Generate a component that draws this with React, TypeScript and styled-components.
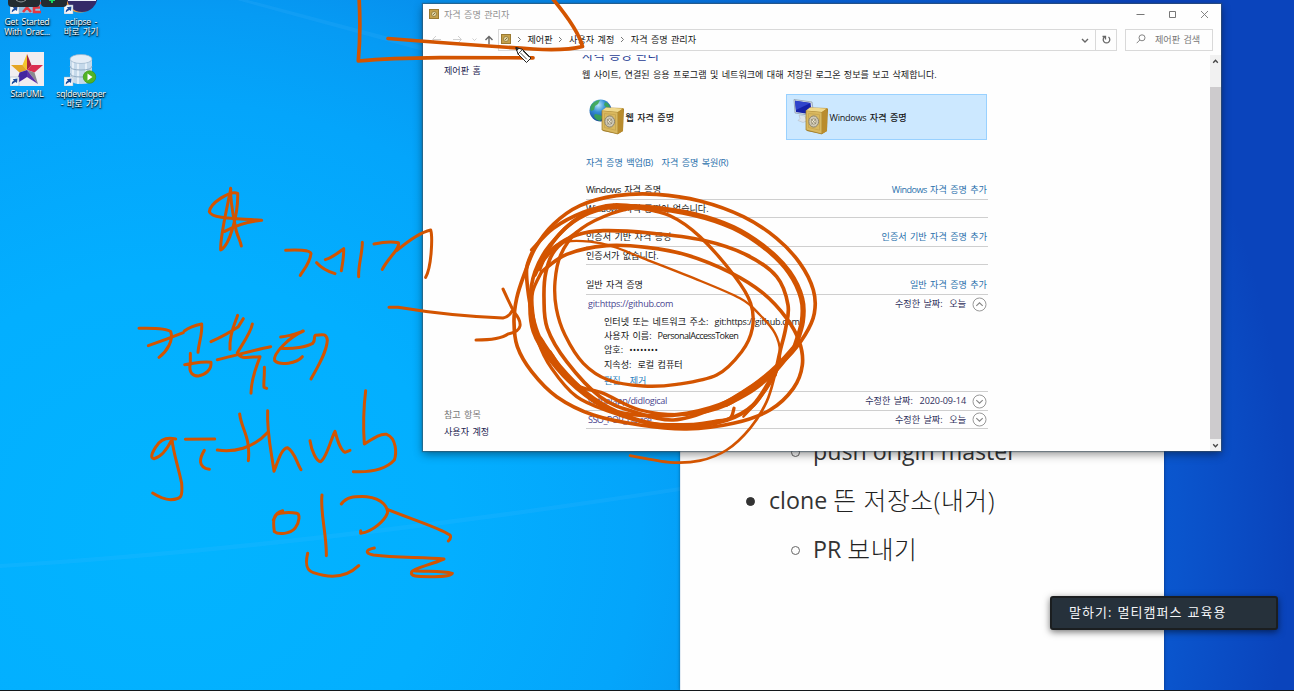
import React from "react";
import styled, { createGlobalStyle } from "styled-components";

const GlobalStyle = createGlobalStyle`
  * { box-sizing: border-box; }
  body { margin: 0; overflow: hidden; font-family: "Open Sans", "Noto Sans CJK KR", sans-serif; }
`;

const Desktop = styled.div`
  position: relative;
  width: 1294px;
  height: 691px;
  overflow: hidden;
  border-bottom: 1px solid #14181c;
  background: radial-gradient(ellipse 1120px 1020px at 170px 530px, #02b4ff 0%, #03afff 25%, #04a5fb 42%, #069bf4 51%, #078aea 60%, #0862d6 78%, #0a55cd 90%, #0a44bc 100%);
`;

/* Desktop shortcuts */
const Shortcuts = styled.div`
  display: grid;
  grid-template-columns: 54px 54px;
  grid-template-rows: 52px 60px;
  width: 108px;
`;
const Shortcut = styled.div<{ $cut?: boolean }>`
  display: flex;
  flex-direction: column;
  align-items: center;
  margin-top: ${(p) => (p.$cut ? "-20px" : "0")};
`;
const ShortcutLabel = styled.div`
  margin-top: 3px;
  font-size: 8.6px;
  line-height: 10px;
  letter-spacing: -0.2px;
  word-spacing: 1.5px;
  text-align: center;
  white-space: nowrap;
  color: #fff;
  text-shadow: 0 1px 1px #000, 1px 1px 2px rgba(0, 0, 0, 0.9);
`;
const OverlayTab = styled.div<{ $x: number; $w: number }>`
  position: absolute;
  top: -8px;
  left: ${(p) => p.$x}px;
  width: ${(p) => p.$w}px;
  height: 15px;
  border-radius: 4px;
  background: #232b31;
`;

/* Document behind the window */
const DocumentPane = styled.div`
  position: absolute;
  left: 680px;
  top: 20px;
  width: 484px;
  height: 670px;
  padding: 406px 0 0 69px;
  background: #fefefe;
  border-left: 1px solid #e4ecf4;
  box-shadow: 0 0 3px rgba(0, 0, 0, 0.4);
`;
const DocLine = styled.div<{ $nested?: boolean }>`
  display: flex;
  align-items: center;
  height: 49px;
  padding-left: ${(p) => (p.$nested ? 40 : -4)}px;
  font-size: 23.2px;
  line-height: 32px;
  color: #333;
  white-space: pre;
`;
const Hangul = styled.span`
  font-size: 24.8px;
  font-weight: 300;
  letter-spacing: 0.55px;
  color: #222;
`;
const Bullet = styled.i<{ $hollow?: boolean }>`
  width: 9px;
  height: 9px;
  margin: 4px ${(p) => (p.$hollow ? 13 : 14)}px 0 ${(p) => (p.$hollow ? 1 : -4)}px;
  border-radius: 50%;
  border: 1px solid ${(p) => (p.$hollow ? "#666" : "#333")};
  background: ${(p) => (p.$hollow ? "transparent" : "#333")};
`;

/* Credential manager window */
const Window = styled.section`
  position: absolute;
  left: 423px;
  top: 4px;
  width: 798px;
  height: 447px;
  display: flex;
  flex-direction: column;
  background: #fefefe;
  box-shadow: 0 0 1px 1px rgba(60, 80, 95, 0.55), 0 3px 9px rgba(0, 0, 0, 0.45);
  font-size: 9.1px;
  color: #161616;
  white-space: nowrap;
  word-spacing: 1px;
`;
const TitleBar = styled.header`
  display: flex;
  align-items: center;
  height: 20px;
  padding: 0 11px 0 6px;
  color: #909090;
  svg { display: block; }
`;
const Title = styled.span`
  flex: 1;
  margin-left: 5px;
`;
const WindowButtons = styled.div`
  display: flex;
  gap: 21px;
`;
const NavRow = styled.nav`
  display: flex;
  align-items: center;
  height: 26px;
  padding: 5px 8px 0 8px;
`;
const NavArrows = styled.div`
  width: 67px;
  height: 21px;
`;
const AddressBar = styled.div`
  display: flex;
  align-items: center;
  width: 619px;
  height: 22px;
  border: 1px solid #d9d9d9;
`;
const Crumbs = styled.div`
  flex: 1;
  display: flex;
  align-items: center;
  padding: 0 0 2px 2px;
  svg { display: block; }
`;
const Crumb = styled.span`
  margin-right: 5.5px;
`;
const Separator = styled.svg`
  margin: 1px 6px 0 0;
`;
const RefreshBox = styled.div`
  display: flex;
  align-items: center;
  justify-content: center;
  width: 21px;
  height: 20px;
  border-left: 1px solid #d9d9d9;
`;
const SearchBox = styled.div`
  display: flex;
  align-items: center;
  gap: 9px;
  width: 88px;
  height: 22px;
  margin-left: 8px;
  padding: 0 0 2px 10px;
  border: 1px solid #d9d9d9;
  color: #777;
`;
const Body = styled.div`
  flex: 1;
  display: flex;
  margin-top: 5px;
  min-height: 0;
  overflow: hidden;
`;
const Sidebar = styled.aside`
  display: flex;
  flex-direction: column;
  width: 159px;
  padding: 7px 0 11px 21px;
  line-height: 17px;
  color: #1c2350;
`;
const SeeAlso = styled.span`
  margin-top: auto;
  color: #777;
`;
const Content = styled.main`
  width: 406px;
  margin-right: auto;
`;
const Heading = styled.h1`
  height: 14px;
  margin: -6px 0 0;
  font-size: 12.4px;
  font-weight: 400;
  line-height: 14px;
  color: #1f3c94;
`;
const Description = styled.p`
  margin: 4px 0 0;
  height: 16px;
  line-height: 16px;
`;
const Cards = styled.div`
  display: flex;
  gap: 3px;
  margin-top: 11px;
`;
const Card = styled.div<{ $active?: boolean }>`
  display: flex;
  align-items: center;
  width: 201px;
  height: 46px;
  padding-left: 6px;
  gap: 0.5px;
  font-weight: 500;
  border: 1px solid ${(p) => (p.$active ? "#99d1ff" : "transparent")};
  background: ${(p) => (p.$active ? "#cce8ff" : "transparent")};
  span { padding-bottom: 1px; }
`;
const Links = styled.div`
  display: flex;
  gap: 9px;
  height: 16px;
  margin: 15px 0 0 4px;
  line-height: 16px;
  color: #2a70ac;
`;
const Group = styled.section<{ $top: number }>`
  margin: ${(p) => p.$top}px 0 0 4px;
  width: 402px;
`;
const GroupHeader = styled.div`
  display: flex;
  justify-content: space-between;
  height: 19px;
  padding-right: 1px;
  line-height: 18px;
  border-bottom: 1px solid #cfcfcf;
`;
const AddLink = styled.span`
  color: #2a70ac;
`;
const EmptyText = styled.div`
  height: 18px;
  line-height: 17px;
  border-bottom: 1px solid #cfcfcf;
`;
const CredentialRow = styled.div<{ $h: number; $line?: boolean }>`
  display: flex;
  align-items: center;
  height: ${(p) => p.$h}px;
  padding: 0 1px 0 2px;
  line-height: 16px;
  color: #4a4690;
  border-bottom: ${(p) => (p.$line ? "1px solid #cfcfcf" : "none")};
`;
const Modified = styled.span`
  margin-left: auto;
  margin-right: 6px;
  color: #30305c;
`;
const Details = styled.div`
  height: 79px;
  padding: 2px 0 0 18px;
  line-height: 14.2px;
  border-bottom: 1px solid #cfcfcf;
`;
const DetailLine = styled.div`
  display: flex;
  gap: 6px;
`;
const DetailActions = styled(DetailLine)`
  gap: 9px;
  margin-top: 2px;
  color: #2a80bc;
`;
const Latin = styled.span<{ $ls?: number }>`
  letter-spacing: ${(p) => p.$ls ?? -0.55}px;
`;
const ScrollBar = styled.div`
  display: flex;
  flex-direction: column;
  width: 11px;
  background: #cdcbcd;
`;
const ScrollEnd = styled.div<{ $h: number }>`
  height: ${(p) => p.$h}px;
  margin-top: ${(p) => (p.$h < 20 ? "auto" : "0")};
  padding: 3px 0 0 2px;
  background: #f1f1f1;
  svg { display: block; }
`;

const Toast = styled.div`
  position: absolute;
  left: 1050px;
  top: 596px;
  width: 228px;
  height: 34px;
  padding-left: 17px;
  border: 2px solid #1b1e20;
  border-radius: 3px;
  background: #26313b;
  box-shadow: 0 2px 7px rgba(0, 0, 0, 0.55);
  color: #f4f6f8;
  font-size: 13px;
  line-height: 29px;
  letter-spacing: 1.05px;
  word-spacing: 0.5px;
  white-space: nowrap;
`;
const Ink = styled.svg`
  position: absolute;
  inset: 0;
  pointer-events: none;
`;

const ShortcutArrow = ({ x, y }: { x: number; y: number }) => (
  <g transform={`translate(${x} ${y})`}>
    <rect width="9" height="9" fill="#f6f8fb" stroke="#9ab" strokeWidth=".5" />
    <path d="M1.800 7.500Q1.500 4.500 4 3.800L2.800 2.200 7.500 1.500 7 6 5.500 5Q3.500 5.500 1.800 7.500z" fill="#1d4c9c" />
  </g>
);

const SafeSmall = ({ size = 10 }: { size?: number }) => (
  <svg width={size} height={size} viewBox="0 0 10 10">
    <rect x=".5" y=".5" width="9" height="9" fill="#c5a04a" stroke="#9a7a32" />
    <circle cx="5" cy="5" r="2.500" fill="#e4d7a8" stroke="#8d7635" strokeWidth=".8" />
    <path d="M4 6l2-2" stroke="#6b5520" strokeWidth=".8" />
  </svg>
);

const Safe = () => (
  <g>
    <path d="M13 13l4-3.500 17 .5 1 1-1 22-5 3-15-3z" fill="#a87d24" />
    <path d="M13 12.500l16 1.500v22l-16-4z" fill="#d9b85f" stroke="#9b7827" strokeWidth=".7" />
    <path d="M13 12.500l4-3 17 1-5 3.500z" fill="#f0d98c" />
    <path d="M29 14l5-3.500V33l-5 3z" fill="#b98c2d" />
    <path d="M15.500 15.500l11 1.200v15.500l-11-2.700z" fill="none" stroke="#c3a04c" strokeWidth=".7" />
    <ellipse cx="20.700" cy="23.500" rx="4.900" ry="5.600" fill="#cfc9b6" stroke="#8a836f" />
    <ellipse cx="20.700" cy="23.500" rx="2.300" ry="2.700" fill="#f1ead2" stroke="#8b8167" strokeWidth=".8" />
    <path d="M18 21l5 5M18.500 26.500l4.500-6" stroke="#80786a" strokeWidth=".6" />
  </g>
);

const WebIcon = () => (
  <svg width="36" height="38" viewBox="0 0 36 38">
    <defs>
      <radialGradient id="globe" cx=".4" cy=".25" r=".8">
        <stop offset="0" stopColor="#b8e8fa" />
        <stop offset=".4" stopColor="#368fd6" />
        <stop offset="1" stopColor="#123f92" />
      </radialGradient>
    </defs>
    <circle cx="11.500" cy="12.500" r="11" fill="url(#globe)" />
    <path d="M3 6Q7 2 11 2l-2 4-3 2-1 4-3 1Q0 10 3 6zM16 4q4 1 5 5l-3 1-3-3zM6 16l5 1 3 2-3 4Q6 22 5 18z" fill="#3ca84a" opacity=".85" />
    <Safe />
  </svg>
);

const ComputerIcon = () => (
  <svg width="36" height="38" viewBox="0 0 36 38">
    <path d="M1 1.500l18 2.500 2 14L2 15z" fill="#d5dfe9" stroke="#8795a6" strokeWidth=".7" />
    <path d="M2 2.800l15.500 2.200 1.500 11.500L3 14z" fill="#1622a8" />
    <path d="M2 2.800l15.500 2.200L3 12z" fill="#3044cc" />
    <path d="M6 17l6 1 1 3 3 1-6 2.500-5-2 2-2z" fill="#dbe2e9" stroke="#aab4be" strokeWidth=".5" />
    <Safe />
  </svg>
);

const Chevron = ({ up }: { up?: boolean }) => (
  <svg width="15" height="15" viewBox="0 0 15 15">
    <circle cx="7.500" cy="7.500" r="6.500" fill="#fff" stroke="#999" />
    <path d={up ? "M4.300 8.800L7.500 5.800l3.200 3" : "M4.300 6.200l3.200 3 3.200-3"} fill="none" stroke="#858585" strokeWidth="1.100" />
  </svg>
);

const Caret = ({ up }: { up?: boolean }) => (
  <svg width="7" height="7" viewBox="0 0 7 7">
    <path d={up ? "M1.200 4.800L3.500 2.200l2.300 2.600" : "M1.200 2.200l2.300 2.600 2.300-2.600"} fill="none" stroke="#444" strokeWidth="1.300" />
  </svg>
);

const Sep = () => (
  <Separator width="5" height="7" viewBox="0 0 5 7">
    <path d="M1 1l2.500 2.500L1 6" fill="none" stroke="#777" />
  </Separator>
);

type Point = [number, number];

/* Catmull-Rom spline through the pen samples */
function smooth(p: Point[]): string {
  let d = `M${p[0][0]} ${p[0][1]}`;
  for (let i = 0; i < p.length - 1; i++) {
    const a = p[i - 1] ?? p[i];
    const b = p[i];
    const c = p[i + 1];
    const e = p[i + 2] ?? c;
    d += `C${b[0] + (c[0] - a[0]) / 6} ${b[1] + (c[1] - a[1]) / 6} ${c[0] - (e[0] - b[0]) / 6} ${c[1] - (e[1] - b[1]) / 6} ${c[0]} ${c[1]}`;
  }
  return d;
}

/* Loops round the credential entry, in thirds of a pixel from (500, 175) */
const loops: { w: number; p: Point[] }[] = [
  { w: 11, p: [[340, 92], [240, 125], [150, 210], [105, 290], [90, 380], [100, 470], [150, 555], [230, 640], [330, 705], [450, 722], [560, 715], [680, 680], [790, 610], [860, 550], [915, 480], [943, 415], [940, 345], [900, 265], [830, 190], [730, 125], [600, 78], [470, 58], [350, 62], [240, 92], [160, 148], [105, 220], [72, 300], [50, 370], [42, 440], [52, 515], [95, 590], [170, 665], [280, 720], [420, 750], [560, 762], [700, 745], [810, 705], [880, 640], [907, 570], [898, 500], [860, 430], [790, 355], [690, 292], [560, 240], [440, 217], [320, 212], [200, 238], [125, 290]] },
  { w: 16, p: [[320, 96], [440, 97], [580, 118], [700, 158], [800, 222], [868, 292], [905, 370], [907, 440], [885, 515]] },
  { w: 11, p: [[885, 515], [830, 585], [760, 645], [680, 690]] },
  { w: 11, p: [[95, 225], [160, 160], [250, 112], [340, 90], [440, 98]] },
  { w: 11, p: [[95, 235], [80, 280], [83, 340], [95, 410], [120, 490], [180, 580], [255, 650]] },
  { w: 13, p: [[120, 490], [180, 575], [260, 655], [350, 710], [450, 745], [560, 755], [680, 735], [760, 690], [820, 600]] },
  { w: 10, p: [[125, 290], [98, 350], [98, 410], [115, 500], [155, 580], [230, 665], [330, 710], [450, 745], [580, 748], [650, 738], [690, 730], [702, 700]] },
  { w: 11, p: [[105, 300], [140, 230], [190, 165], [255, 120], [340, 92]] },
  { w: 11, p: [[125, 262], [170, 212], [230, 180], [310, 167], [450, 174], [610, 196], [740, 240], [830, 305], [864, 390], [857, 460], [840, 530], [825, 600]] },
  { w: 8, p: [[825, 600], [800, 680], [750, 760], [680, 825], [600, 857], [510, 862], [390, 842]] },
  { w: 10, p: [[480, 108], [410, 98], [310, 125], [230, 172], [182, 240], [165, 320], [169, 400], [195, 480], [250, 565], [325, 615], [430, 633], [530, 628], [650, 600], [725, 530], [757, 460], [752, 385], [705, 305], [600, 185], [510, 122], [410, 98]] },
  { w: 11, p: [[230, 172], [165, 225], [138, 290], [132, 370], [142, 460], [200, 560], [300, 665], [400, 710], [520, 735], [640, 700], [760, 630], [832, 570], [895, 500]] },
  { w: 7, p: [[120, 285], [150, 225], [200, 200], [270, 200], [340, 215], [430, 250], [570, 305], [720, 370], [780, 420], [825, 475], [840, 530], [830, 590], [780, 670], [730, 725]] },
  { w: 10, p: [[150, 530], [220, 625], [310, 655], [420, 705], [560, 718], [680, 690], [790, 615]] },
];

const handwriting: string[] = [
  "M302 55C300 100 315 160 318 180C324 202 332 215 334 228",
  "M302 58C290 120 270 200 272 240C300 225 325 130 323 70C300 60 240 100 238 125C246 148 330 145 395 151C350 155 310 170 284 184",
  "M467 241C500 238 540 240 543 250C540 280 520 300 511 316",
  "M560 278C575 295 590 303 615 311M586 269C610 262 635 240 641 236C642 260 637 285 634 302",
  "M697 217C697 250 684 290 686 320",
  "M732 222C760 216 790 215 805 218C812 235 775 262 757 298M800 242C850 200 880 185 902 180C908 200 905 290 887 322",
  "M27 475C70 474 110 474 122 485C132 510 110 545 87 562M55 527C90 515 130 500 160 488",
  "M163 483C180 470 200 465 215 462C218 490 206 520 204 547",
  "M181 550L181 580C175 610 190 618 205 618C225 615 245 600 243 577C215 572 190 582 164 584",
  "M323 436C315 460 297 490 300 538M243 515C280 498 310 480 325 470L340 446",
  "M367 462C362 490 335 525 322 548C330 568 350 562 390 560C380 590 364 620 363 670",
  "M262 569C320 556 370 540 422 530M403 592C404 620 400 640 402 652L410 655",
  "M452 501C480 498 500 490 520 483C480 500 428 550 434 572C450 588 500 580 517 560",
  "M452 535C490 538 530 530 548 520C558 510 550 500 556 496C580 492 590 492 592 510C590 550 560 595 543 627",
  "M137 807C110 800 90 810 78 830C65 850 60 865 72 866C100 860 120 820 126 808C130 850 145 890 155 940C158 980 155 988 122 989C100 988 85 980 68 969",
  "M166 808L254 807M223 841C208 865 203 892 238 898",
  "M329 732C335 780 362 800 355 872M262 840C310 848 370 835 412 788",
  "M413 722C410 790 425 850 432 904C445 870 455 835 472 833C495 845 500 880 513 899",
  "M540 812C545 845 560 875 572 875C590 865 605 800 615 784C622 810 630 840 645 847L660 841",
  "M707 662C700 720 700 780 703 822C730 805 750 790 770 793C800 805 800 850 793 870C770 895 730 908 670 905",
  "M458 1022C430 1030 428 1050 433 1085C445 1095 480 1092 495 1075C510 1055 510 1032 500 1030C480 1026 450 1028 440 1033L430 1050",
  "M576 975C570 1030 590 1090 589 1157M533 1150C527 1175 525 1200 550 1208C600 1225 650 1222 686 1187",
  "M634 1002C650 980 670 979 710 980C760 985 775 1015 772 1030C765 1050 730 1085 692 1090L692 1082",
  "M772 1018C850 1050 920 1070 960 1095Q965 1103 955 1113",
  "M733 1134C705 1140 705 1150 730 1155C800 1165 880 1160 942 1167C900 1185 850 1195 845 1205C840 1220 860 1220 900 1220C930 1220 960 1220 967 1210C940 1203 900 1205 850 1202",
];

export default function App() {
  return (
    <Desktop>
      <GlobalStyle />
      <Ink width="680" height="690" viewBox="0 0 680 690">
        <path d="M225 -6L423 46V51L215 -6zM0 564Q300 545 680 487V491Q300 550 0 568z" fill="#6cc8ff" opacity=".1" />
      </Ink>
      <Shortcuts>
        <Shortcut $cut>
          <svg width="34" height="34" viewBox="0 0 34 34">
            <path d="M6 0h24v33H6z" fill="#c9d1dc" opacity=".7" />
            <path d="M13 23l8 9M21 23l-8 9M31 23h-7v9h7M24 27.500h6" stroke="#e63740" strokeWidth="2.600" fill="none" />
            <ShortcutArrow x={0} y={25} />
          </svg>
          <ShortcutLabel>Get Started<br />With Orac...</ShortcutLabel>
        </Shortcut>
        <Shortcut $cut>
          <svg width="34" height="34" viewBox="0 0 34 34">
            <circle cx="16" cy="17" r="15.500" fill="#f29b35" />
            <circle cx="18" cy="16.500" r="15.500" fill="#352a68" />
            <path d="M4 20h28M4 16h28" stroke="#edf0f8" strokeWidth="2" />
            <ShortcutArrow x={0} y={25} />
          </svg>
          <ShortcutLabel>eclipse -<br />바로 가기</ShortcutLabel>
        </Shortcut>
        <Shortcut>
          <svg width="34" height="34" viewBox="0 0 34 34">
            <rect width="34" height="34" fill="#f1edf0" />
            <path d="M17 2l-4.500 11 4.500 5z" fill="#f4c52c" />
            <path d="M12.500 13L1 13l8.500 7.500L17 18z" fill="#e5a526" />
            <path d="M17 2l4.500 11L17 18z" fill="#a92340" />
            <path d="M21.500 13H33l-8.500 7.500L17 18z" fill="#db2e50" />
            <path d="M24.500 20.500L28 32 17 18z" fill="#8a8a8f" />
            <path d="M28 32l-11-7v-7z" fill="#5b2fa8" />
            <path d="M9.500 20.500L6 32l11-7v-7z" fill="#4326a0" />
            <ShortcutArrow x={0} y={25} />
          </svg>
          <ShortcutLabel>StarUML</ShortcutLabel>
        </Shortcut>
        <Shortcut>
          <svg width="34" height="34" viewBox="0 0 34 34">
            <path d="M6 7v20q0 5 11 5t11-5V7z" fill="#c5d9ea" />
            <path d="M9 9v21M14 11v21M22 11v20" stroke="#edf5fc" strokeWidth="2" opacity=".8" />
            <ellipse cx="17" cy="7" rx="11" ry="4.500" fill="#e4edf6" stroke="#9ab3ca" strokeWidth=".7" />
            <path d="M6 14q0 4 11 4t11-4M6 21q0 4 11 4t11-4" fill="none" stroke="#91acc4" />
            <circle cx="25.500" cy="25" r="6.300" fill="#52b425" stroke="#3b8d1a" strokeWidth=".6" />
            <path d="M23.500 21.500l5 3.500-5 3.500z" fill="#fff" />
            <ShortcutArrow x={0} y={25} />
          </svg>
          <ShortcutLabel>sqldeveloper<br />- 바로 가기</ShortcutLabel>
        </Shortcut>
      </Shortcuts>
      <OverlayTab $x={8} $w={32} />
      <OverlayTab $x={41} $w={26} />
      <Ink width="70" height="8" viewBox="0 0 70 8">
        <path d="M16 0q5 4 10 0" stroke="#8e969b" fill="none" />
        <path d="M52 0v3M49 0h6" stroke="#18d860" strokeWidth="2" />
      </Ink>

      <DocumentPane>
        <DocLine $nested><Bullet $hollow />push origin master</DocLine>
        <DocLine><Bullet />clone <Hangul>뜬 저장소(내거)</Hangul></DocLine>
        <DocLine $nested><Bullet $hollow />PR <Hangul>보내기</Hangul></DocLine>
      </DocumentPane>

      <Window>
        <TitleBar>
          <SafeSmall />
          <Title>자격 증명 관리자</Title>
          <WindowButtons>
            <svg width="11" height="11" viewBox="0 0 11 11"><path d="M1.500 5.500h8" stroke="#777" /></svg>
            <svg width="11" height="11" viewBox="0 0 11 11"><path d="M2.500 2.500h6v6h-6z" fill="none" stroke="#777" /></svg>
            <svg width="11" height="11" viewBox="0 0 11 11"><path d="M2 2l7 7M9 2l-7 7" stroke="#777" strokeWidth=".9" /></svg>
          </WindowButtons>
        </TitleBar>
        <NavRow>
          <NavArrows>
            <svg width="67" height="21" viewBox="0 0 67 21" fill="none">
              <path d="M2 10.500h8M5 7L1.500 10.500 5 14M22 10.500h8M27 7l3.500 3.500-3.500 3.500M41.500 9.500l2 2 2-2" stroke="#d0d0d0" />
              <path d="M58 15.500V8M54.500 11L58 7.500l3.500 3.500" stroke="#666" strokeWidth="1.400" />
            </svg>
          </NavArrows>
          <AddressBar>
            <Crumbs>
              <SafeSmall /><Crumb />
              <Sep /><Crumb>제어판</Crumb>
              <Sep /><Crumb>사용자 계정</Crumb>
              <Sep /><Crumb>자격 증명 관리자</Crumb>
            </Crumbs>
            <svg width="20" height="20" viewBox="0 0 20 20"><path d="M7 9l3 3 3-3" fill="none" stroke="#666" strokeWidth="1.400" /></svg>
            <RefreshBox>
              <svg width="11" height="11" viewBox="0 0 11 11" fill="none" stroke="#666" strokeWidth="1.300"><path d="M7.500 3A3.300 3.300 0 1 1 3.500 3M1.500 2.500h3v3" /></svg>
            </RefreshBox>
          </AddressBar>
          <SearchBox>
            <svg width="10" height="10" viewBox="0 0 10 10" fill="none" stroke="#777" strokeWidth=".9"><circle cx="6" cy="3.800" r="3" /><path d="M3.800 6L.7 9.200" /></svg>
            <span>제어판 검색</span>
          </SearchBox>
        </NavRow>
        <Body>
          <Sidebar>
            <span>제어판 홈</span>
            <SeeAlso>참고 항목</SeeAlso>
            <span>사용자 계정</span>
          </Sidebar>
          <Content>
            <Heading>자격 증명 관리</Heading>
            <Description>웹 사이트, 연결된 응용 프로그램 및 네트워크에 대해 저장된 로그온 정보를 보고 삭제합니다.</Description>
            <Cards>
              <Card><WebIcon /><span>웹 자격 증명</span></Card>
              <Card $active><ComputerIcon /><span><Latin $ls={-0.25}>Windows</Latin> 자격 증명</span></Card>
            </Cards>
            <Links>
              <span>자격 증명 백업<Latin>(B)</Latin></span>
              <span>자격 증명 복원<Latin>(R)</Latin></span>
            </Links>
            <Group $top={10}>
              <GroupHeader><span><Latin>Windows</Latin> 자격 증명</span><AddLink><Latin>Windows</Latin> 자격 증명 추가</AddLink></GroupHeader>
              <EmptyText><Latin>Windows</Latin> 자격 증명이 없습니다.</EmptyText>
            </Group>
            <Group $top={10}>
              <GroupHeader><span>인증서 기반 자격 증명</span><AddLink>인증서 기반 자격 증명 추가</AddLink></GroupHeader>
              <EmptyText>인증서가 없습니다.</EmptyText>
            </Group>
            <Group $top={11}>
              <GroupHeader><span>일반 자격 증명</span><AddLink>일반 자격 증명 추가</AddLink></GroupHeader>
              <CredentialRow $h={18}><Latin $ls={-0.3}>git:https://github.com</Latin><Modified>수정한 날짜:&nbsp; 오늘</Modified><Chevron up /></CredentialRow>
              <Details>
                <DetailLine><span>인터넷 또는 네트워크 주소:</span><Latin $ls={-0.3}>git:https://github.com</Latin></DetailLine>
                <DetailLine><span>사용자 이름:</span><Latin>PersonalAccessToken</Latin></DetailLine>
                <DetailLine><span>암호:</span><Latin $ls={0.2}>••••••••</Latin></DetailLine>
                <DetailLine><span>지속성:</span><span>로컬 컴퓨터</span></DetailLine>
                <DetailActions><span>편집</span><span>제거</span></DetailActions>
              </Details>
              <CredentialRow $h={19} $line><Latin $ls={-0.35}>virtualapp/didlogical</Latin><Modified>수정한 날짜:&nbsp; <Latin $ls={-0.1}>2020-09-14</Latin></Modified><Chevron /></CredentialRow>
              <CredentialRow $h={18} $line><Latin>SSO_POP_Device</Latin><Modified>수정한 날짜:&nbsp; 오늘</Modified><Chevron /></CredentialRow>
            </Group>
          </Content>
          <ScrollBar>
            <ScrollEnd $h={32}><Caret up /></ScrollEnd>
            <ScrollEnd $h={12}><Caret /></ScrollEnd>
          </ScrollBar>
        </Body>
      </Window>

      <Toast>말하기: 멀티캠퍼스 교육용</Toast>

      <Ink width="1294" height="691" viewBox="0 0 1294 691" fill="none" stroke="#d35400" strokeLinecap="round" strokeLinejoin="round">
        <path d="M359 -3Q361 30 358.300 61Q390 58 440 57.600Q490 57.500 533 57.800" strokeWidth="3.700" />
        <path d="M388 38.500Q470 45 533 49Q565 51 582.500 46.500Q578 29 552 -2" strokeWidth="3.700" />
        <path d="M389 307.300L398 307.300Q450 316 503 318Q509 317 512 311M503 289Q509 302 514 312Q521 320 520 326Q519 332 508 334Q500 340 476 340" strokeWidth="3" />
        <g transform="translate(130 170) scale(.3333333)" strokeWidth="9">
          {handwriting.map((d) => <path key={d} d={d} />)}
        </g>
        <g transform="translate(500 175) scale(.3333333)">
          {loops.map((l, i) => <path key={i} d={smooth(l.p)} strokeWidth={l.w} />)}
        </g>
        <g stroke="#222" strokeWidth="1">
          <path d="M516 48l2 6 8.500 8.500 4.500-4.500-8.500-8.500z" fill="#fff" />
          <path d="M518 54l4.500-4.500M520.500 53l6 6M523 51l6 6" strokeWidth=".8" />
          <path d="M516 48l.7 2.500 1.800-1.800z" fill="#222" />
        </g>
      </Ink>
    </Desktop>
  );
}
